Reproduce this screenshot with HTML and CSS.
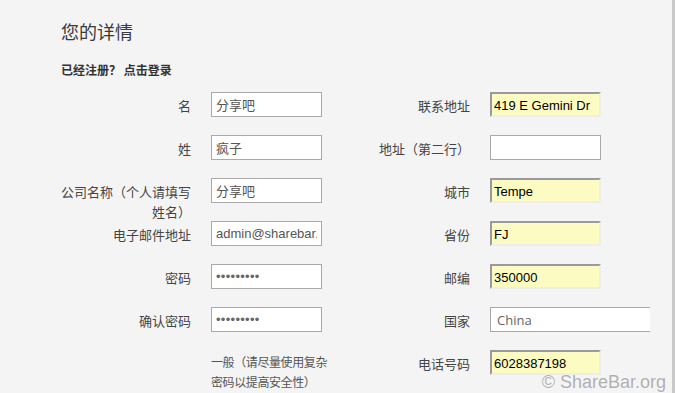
FILE: index.html
```html
<!DOCTYPE html>
<html lang="zh">
<head>
<meta charset="utf-8">
<link rel="stylesheet" href="styles.css">
</head>
<body>
<div class="page">
  <h1 class="title">您的详情</h1>
  <p class="login">已经注册？ 点击登录</p>
  <div class="form">
    <div class="col">
      <label class="lbl">名</label>
      <input class="field" type="text" value="分享吧" readonly>
      <label class="lbl">姓</label>
      <input class="field" type="text" value="疯子" readonly>
      <label class="lbl">公司名称（个人请填写姓名）</label>
      <input class="field" type="text" value="分享吧" readonly>
      <label class="lbl">电子邮件地址</label>
      <input class="field" type="text" value="admin@sharebar.org" readonly>
      <label class="lbl">密码</label>
      <input class="field dots" type="text" value="•••••••••" readonly>
      <label class="lbl">确认密码</label>
      <input class="field dots" type="text" value="•••••••••" readonly>
      <span class="lbl"></span>
      <p class="hint">一般（请尽量使用复杂<br>密码以提高安全性）</p>
    </div>
    <div class="col">
      <label class="lbl">联系地址</label>
      <input class="field auto" type="text" value="419 E Gemini Dr" readonly>
      <label class="lbl">地址（第二行）</label>
      <input class="field" type="text" value="" readonly>
      <label class="lbl">城市</label>
      <input class="field auto" type="text" value="Tempe" readonly>
      <label class="lbl">省份</label>
      <input class="field auto" type="text" value="FJ" readonly>
      <label class="lbl">邮编</label>
      <input class="field auto" type="text" value="350000" readonly>
      <label class="lbl">国家</label>
      <input class="field country" type="text" value="China" readonly>
      <label class="lbl">电话号码</label>
      <input class="field auto" type="text" value="6028387198" readonly>
    </div>
  </div>
  <div class="mark">© ShareBar.org</div>
</div>
</body>
</html>
```
FILE: styles.css
```css
html, body {
  margin: 0;
  padding: 0;
  background: #f4f4f4;
}
.page {
  position: relative;
  box-sizing: border-box;
  width: 675px;
  height: 393px;
  padding: 19px 0 0 61px;
  background: #f4f4f4;
  border-right: 3px solid #c9c9c9;
  overflow: hidden;
  font-family: "Noto Sans CJK SC", "Liberation Sans", sans-serif;
}
.title {
  margin: 0;
  font-size: 18px;
  line-height: 24px;
  font-weight: normal;
  color: #3a3a3a;
}
.login {
  margin: 19px 0 0;
  font-size: 12px;
  line-height: 16px;
  font-weight: bold;
  color: #333;
}
.form {
  display: flex;
  column-gap: 18px;
  margin-top: 14px;
}
.col {
  display: grid;
  grid-template-columns: 130px 111px;
  column-gap: 20px;
  grid-auto-rows: 25px;
  row-gap: 18px;
}
.lbl {
  display: block;
  text-align: right;
  font-size: 13px;
  line-height: 20px;
  padding-top: 4px;
  color: #444;
}
.field {
  box-sizing: border-box;
  width: 111px;
  height: 25px;
  margin: 0;
  padding: 0 4px;
  border: 1px solid #a9a9a9;
  background: #fff;
  color: #555;
  font-family: "Liberation Sans", "Noto Sans CJK SC", sans-serif;
  font-size: 13px;
  outline: none;
}
.dots {
  color: #666;
  letter-spacing: 0.3px;
}
.auto {
  border: 2px solid #9a9a9a;
  border-right-color: #ededed;
  border-bottom-color: #ededed;
  background: #fbfbc2;
  color: #000;
  padding: 1px 2px 0;
}
.country {
  width: 160px;
  border-right: 0;
  padding-left: 6px;
  color: #666;
  font-family: "Open Sans", "Liberation Sans", sans-serif;
}
.hint {
  margin: 0;
  padding-top: 2px;
  font-size: 12px;
  letter-spacing: -0.4px;
  line-height: 20px;
  white-space: nowrap;
  color: #555;
}
.mark {
  position: absolute;
  right: 6px;
  bottom: 1px;
  font-family: "Liberation Sans", sans-serif;
  font-size: 18px;
  line-height: 20px;
  color: #b0b0b0;
  text-shadow: 0 0 2px #fff;
}
```
